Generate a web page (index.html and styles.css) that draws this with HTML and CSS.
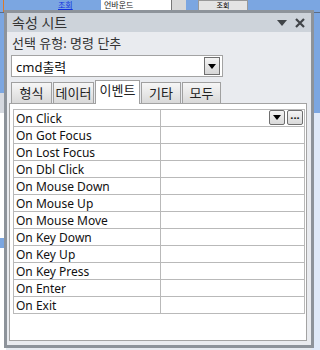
FILE: index.html
```html
<!DOCTYPE html>
<html lang="ko">
<head>
    <meta charset="UTF-8">
    <title>속성 시트</title>
    <link rel="stylesheet" href="styles.css">
</head>
<body>
    <div class="desk">
        <div class="form-top">
            <span class="grip"></span>
            <span class="link">조회</span>
            <span class="combo-bg"><span>언바운드</span><i class="arr"></i></span>
            <span class="btn-bg">조회</span>
        </div>
        <div class="form-body">
            <div class="side-left"></div>
            <div class="side-mid"></div>
            <div class="side-right"></div>
        </div>

        <div class="sheet">
            <div class="titlebar">
                <span class="title">속성 시트</span>
                <span class="tools">
                    <svg width="10" height="6" viewBox="0 0 10 6"><path d="M0 0h10L5 6z" fill="#404448"/></svg>
                    <svg width="10" height="10" viewBox="0 0 10 10"><path d="M1 1l8 8M9 1l-8 8" stroke="#404448" stroke-width="2.2"/></svg>
                </span>
            </div>
            <div class="sel-type">선택 유형: 명령 단추</div>
            <div class="combo">
                <span>cmd출력</span>
                <span class="drop"><svg width="8" height="5" viewBox="0 0 8 5"><path d="M0 0h8L4 5z" fill="#000"/></svg></span>
            </div>
            <div class="tabs">
                <span class="tab t1">형식</span>
                <span class="tab t2">데이터</span>
                <span class="tab t3 active">이벤트</span>
                <span class="tab t4">기타</span>
                <span class="tab t5">모두</span>
            </div>
            <div class="page">
                <table class="props">
                    <tr>
                        <td>On Click</td>
                        <td class="val">
                            <span class="mini"><svg width="8" height="5" viewBox="0 0 8 5"><path d="M0 0h8L4 5z" fill="#000"/></svg></span>
                            <span class="mini">···</span>
                        </td>
                    </tr>
                    <tr><td>On Got Focus</td><td></td></tr>
                    <tr><td>On Lost Focus</td><td></td></tr>
                    <tr><td>On Dbl Click</td><td></td></tr>
                    <tr><td>On Mouse Down</td><td></td></tr>
                    <tr><td>On Mouse Up</td><td></td></tr>
                    <tr><td>On Mouse Move</td><td></td></tr>
                    <tr><td>On Key Down</td><td></td></tr>
                    <tr><td>On Key Up</td><td></td></tr>
                    <tr><td>On Key Press</td><td></td></tr>
                    <tr><td>On Enter</td><td></td></tr>
                    <tr><td>On Exit</td><td></td></tr>
                </table>
            </div>
        </div>
    </div>
</body>
</html>
```

FILE: styles.css
```css
body {
    margin: 0;
    font-family: "Noto Sans", "Noto Sans CJK KR", sans-serif;
}

.desk {
    position: relative;
    width: 320px;
    height: 350px;
    overflow: hidden;
    background: #7ba6e1;
}

/* form design view behind the sheet */
.form-top {
    height: 12px;
    display: flex;
    align-items: flex-start;
    background: #7ba6e1;
    border-bottom: 1px solid #5a6c86;
}

.grip {
    width: 3px;
    height: 12px;
    border-right: 1px solid #d97a2c;
    margin-right: 48px;
}

.link {
    color: #1030e0;
    font-size: 8px;
    line-height: 9px;
    text-decoration: underline;
    font-family: "Noto Sans CJK KR", sans-serif;
    width: 49px;
    padding-left: 6px;
    box-sizing: border-box;
}

.combo-bg {
    display: flex;
    width: 85px;
    height: 10px;
    background: #fff;
    color: #222;
    font-size: 8px;
    line-height: 9px;
    padding-left: 3px;
    box-sizing: border-box;
    font-family: "Noto Sans CJK KR", sans-serif;
    position: relative;
}

.combo-bg .arr {
    position: absolute;
    right: 0;
    top: 0;
    width: 14px;
    height: 10px;
    background: #d8d8d8;
    border-left: 1px solid #777;
}

.btn-bg {
    margin-left: 12px;
    width: 48px;
    height: 9px;
    background: #e4e4e4;
    border: 1px solid #999;
    font-size: 7px;
    line-height: 8px;
    text-align: center;
    font-family: "Noto Sans CJK KR", sans-serif;
}

.form-body {
    display: flex;
    height: 337px;
}

.side-left {
    width: 6px;
    background: linear-gradient(#7ba6e1 0 80px, #d5d9e0 80px 100px, #fff 100px 225px, #7ba6e1 225px 235px, #fff 235px);
}

.side-mid {
    flex: 1;
    background: #e6eaf0;
}

.side-right {
    width: 8px;
    background: linear-gradient(#7ba6e1 0 100px, #dfe9f8 100px);
}

/* property sheet window */
.sheet {
    position: absolute;
    left: 4px;
    top: 10px;
    width: 304px;
    height: 332px;
    border: 3px solid #8d939a;
    background: #e9ebef;
    display: flex;
    flex-direction: column;
}

.titlebar {
    height: 19px;
    background: #cdd3da;
    display: flex;
    align-items: center;
    justify-content: space-between;
    padding: 0 6px 0 5px;
}

.title {
    font-size: 14px;
    color: #333;
    line-height: 19px;
}

.tools {
    display: flex;
    align-items: center;
    gap: 8px;
}

.sel-type {
    font-size: 13px;
    color: #333;
    line-height: 16px;
    padding: 3px 0 0 5px;
    height: 20px;
}

.combo {
    margin: 0 0 0 4px;
    height: 20px;
    border: 1px solid #a3a3a3;
    background: #fff;
    display: flex;
    align-items: center;
    justify-content: space-between;
    padding-left: 4px;
    font-size: 13px;
    color: #111;
    width: 206px;
}

.drop {
    width: 14px;
    height: 16px;
    margin-right: 2px;
    border: 1px solid #6f6f6f;
    background: linear-gradient(#f4f4f4, #d6d6d6);
    display: flex;
    align-items: center;
    justify-content: center;
}

.tabs {
    display: flex;
    align-items: flex-end;
    gap: 1px;
    height: 23px;
    margin-top: 3px;
    padding-left: 4px;
}

.tab {
    height: 20px;
    border: 1px solid #a0a0a0;
    border-bottom: none;
    background: linear-gradient(#f6f6f6, #d9d9d9);
    font-size: 13px;
    color: #222;
    line-height: 20px;
    text-align: center;
    font-family: "Noto Sans CJK KR", sans-serif;
}

.t1 { width: 39px; }
.t2 { width: 39px; }
.t3 { width: 43px; }
.t4 { width: 38px; }
.t5 { width: 37px; }

.tab.active {
    height: 23px;
    background: #fff;
    margin-bottom: -1px;
    position: relative;
    line-height: 18px;
}

.page {
    margin-left: 2px;
    width: 298px;
    height: 238px;
    border: 1px solid #a3a3a3;
    background: #fff;
    padding: 5px 0 0 3px;
    box-sizing: border-box;
}

.props {
    border-collapse: collapse;
    width: 292px;
}

.props td {
    border: 1px solid #b9b9b9;
    height: 16px;
    padding: 0 0 0 2px;
    font-size: 12px;
    line-height: 15px;
    color: #111;
    width: 156px;
}

.props td.val {
    width: auto;
    text-align: right;
    padding: 0 1px 0 0;
    font-size: 0;
}

.mini {
    display: inline-flex;
    align-items: center;
    justify-content: center;
    width: 14px;
    height: 13px;
    margin-left: 2px;
    border: 1px solid #6f6f6f;
    border-radius: 2px;
    background: linear-gradient(#f4f4f4, #d9d9d9);
    font-size: 11px;
    font-weight: bold;
    line-height: 10px;
    vertical-align: middle;
}
```
